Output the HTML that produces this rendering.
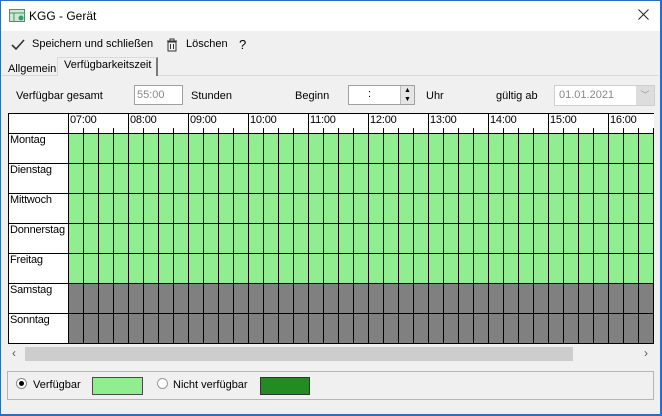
<!DOCTYPE html>
<html><head><meta charset="utf-8"><style>
*{margin:0;padding:0;box-sizing:border-box}
body{width:662px;height:416px;overflow:hidden;background:#f0f0f0;font-family:"Liberation Sans",sans-serif;font-size:11px;color:#000;position:relative}
.a{position:absolute;white-space:nowrap}
#win{position:absolute;left:0;top:0;width:662px;height:416px;border:1px solid #2b6cc4;border-right-width:2px;border-bottom-width:2px}
.hl{position:absolute;height:1px;background:#000}
.vl{position:absolute;width:1px;background:#000}
.g{letter-spacing:-0.2px}
</style></head><body>
<div class="a" style="left:1px;top:1px;width:659px;height:30px;background:#fff"></div>
<svg class="a" style="left:9px;top:9px" width="16" height="13"><rect x="0.5" y="0.5" width="15" height="12" fill="#cfe8d4" stroke="#3c9a6a"/><line x1="1" y1="4" x2="15" y2="4" stroke="#3c9a6a"/><line x1="5" y1="4" x2="5" y2="12" stroke="#3c9a6a"/><circle cx="12" cy="9" r="2.5" fill="#3c9a6a"/></svg>
<div class="a" style="left:29px;top:9px;font-size:12px">KGG - Gerät</div>
<svg class="a" style="left:638px;top:9px" width="11" height="11"><path d="M0.5 0.5L10.5 10.5M10.5 0.5L0.5 10.5" stroke="#222" stroke-width="1"/></svg>
<svg class="a" style="left:11px;top:39px" width="14" height="12"><path d="M1 6 L5 10 L13 1" stroke="#333" stroke-width="1.6" fill="none"/></svg>
<div class="a" style="left:32px;top:38px">Speichern und schließen</div>
<svg class="a" style="left:166px;top:38px" width="12" height="14"><path d="M1 3h10M4 3V1h4v2M2 4h8v9H2z M4.5 6v5M7.5 6v5" stroke="#333" fill="none"/></svg>
<div class="a" style="left:186px;top:38px">Löschen</div>
<div class="a" style="left:239px;top:37px;font-size:13px">?</div>
<div class="a" style="left:2px;top:75px;width:656px;height:1px;background:#d8d8d8"></div>
<div class="a" style="left:8px;top:63px">Allgemein</div>
<div class="a" style="left:57px;top:57px;width:101px;height:19px;background:#f0f0f0;border:1px solid #dadada;border-bottom:none;border-right:2px solid #7a7a7a"></div>
<div class="a" style="left:64px;top:59px">Verfügbarkeitszeit</div>
<div class="a" style="left:16px;top:90px">Verfügbar gesamt</div>
<div class="a" style="left:134px;top:85px;width:49px;height:20px;background:#fff;border:1px solid #a0a0a0;color:#888;padding:3px 0 0 2px">55:00</div>
<div class="a" style="left:191px;top:90px">Stunden</div>
<div class="a" style="left:295px;top:90px">Beginn</div>
<div class="a" style="left:348px;top:85px;width:67px;height:20px;background:#fff;border:1px solid #a0a0a0"></div>
<div class="a" style="left:368px;top:88px">:</div>
<div class="a" style="left:400px;top:86px;width:14px;height:18px;background:#e5e5e5;border-left:1px solid #bbb;font-size:7px;line-height:9px;text-align:center">▲<br>▼</div>
<div class="a" style="left:426px;top:90px">Uhr</div>
<div class="a" style="left:496px;top:90px">gültig ab</div>
<div class="a" style="left:554px;top:85px;width:101px;height:21px;background:#fff;border:1px solid #cfcfcf;color:#888;padding:3px 0 0 4px">01.01.2021</div>
<div class="a" style="left:636px;top:86px;width:18px;height:19px;background:#ddd;color:#999;font-size:9px;text-align:center;line-height:19px">﹀</div>
<div class="a" style="left:8px;top:113px;width:646px;height:231px;background:#fff"></div>
<div class="a" style="left:68px;top:133px;width:586px;height:150px;background:#90ee90"></div>
<div class="a" style="left:68px;top:283px;width:586px;height:60px;background:#808080"></div>
<div class="a" style="left:68px;top:133px;width:586px;height:211px;background:repeating-linear-gradient(90deg,#000 0 1px,transparent 1px 15px)"></div>
<div class="a" style="left:68px;top:128px;width:586px;height:5px;background:repeating-linear-gradient(90deg,#000 0 1px,transparent 1px 15px)"></div>
<div class="a" style="left:68px;top:113px;width:586px;height:20px;background:repeating-linear-gradient(90deg,#000 0 1px,transparent 1px 60px)"></div>
<div class="hl" style="left:8px;top:113px;width:646px"></div>
<div class="hl" style="left:8px;top:133px;width:646px"></div>
<div class="hl" style="left:8px;top:163px;width:646px"></div>
<div class="hl" style="left:8px;top:193px;width:646px"></div>
<div class="hl" style="left:8px;top:223px;width:646px"></div>
<div class="hl" style="left:8px;top:253px;width:646px"></div>
<div class="hl" style="left:8px;top:283px;width:646px"></div>
<div class="hl" style="left:8px;top:313px;width:646px"></div>
<div class="hl" style="left:8px;top:343px;width:646px"></div>
<div class="vl" style="left:8px;top:113px;height:231px"></div>
<div class="a g" style="left:70px;top:114px">07:00</div>
<div class="a g" style="left:130px;top:114px">08:00</div>
<div class="a g" style="left:190px;top:114px">09:00</div>
<div class="a g" style="left:250px;top:114px">10:00</div>
<div class="a g" style="left:310px;top:114px">11:00</div>
<div class="a g" style="left:370px;top:114px">12:00</div>
<div class="a g" style="left:430px;top:114px">13:00</div>
<div class="a g" style="left:490px;top:114px">14:00</div>
<div class="a g" style="left:550px;top:114px">15:00</div>
<div class="a g" style="left:610px;top:114px">16:00</div>
<div class="a g" style="left:10px;top:134px">Montag</div>
<div class="a g" style="left:10px;top:164px">Dienstag</div>
<div class="a g" style="left:10px;top:194px">Mittwoch</div>
<div class="a g" style="left:10px;top:224px">Donnerstag</div>
<div class="a g" style="left:10px;top:254px">Freitag</div>
<div class="a g" style="left:10px;top:284px">Samstag</div>
<div class="a g" style="left:10px;top:314px">Sonntag</div>
<div class="a" style="left:12px;top:346px;color:#555;font-size:12px">‹</div>
<div class="a" style="left:25px;top:347px;width:548px;height:14px;background:#cdcdcd"></div>
<div class="a" style="left:644px;top:346px;color:#555;font-size:12px">›</div>
<div class="a" style="left:7px;top:371px;width:647px;height:29px;border:1px solid #b5b5b5"></div>
<div class="a" style="left:16px;top:378px;width:11px;height:11px;border-radius:50%;border:1px solid #888;background:#fff"></div>
<div class="a" style="left:19px;top:381px;width:5px;height:5px;border-radius:50%;background:#000"></div>
<div class="a" style="left:33px;top:379px">Verfügbar</div>
<div class="a" style="left:92px;top:377px;width:51px;height:18px;background:#90ee90;border:1px solid #4a4a4a"></div>
<div class="a" style="left:157px;top:378px;width:11px;height:11px;border-radius:50%;border:1px solid #999;background:#fff"></div>
<div class="a" style="left:173px;top:379px">Nicht verfügbar</div>
<div class="a" style="left:260px;top:377px;width:50px;height:18px;background:#228b22;border:1px solid #333"></div>
<div id="win"></div>
</body></html>
